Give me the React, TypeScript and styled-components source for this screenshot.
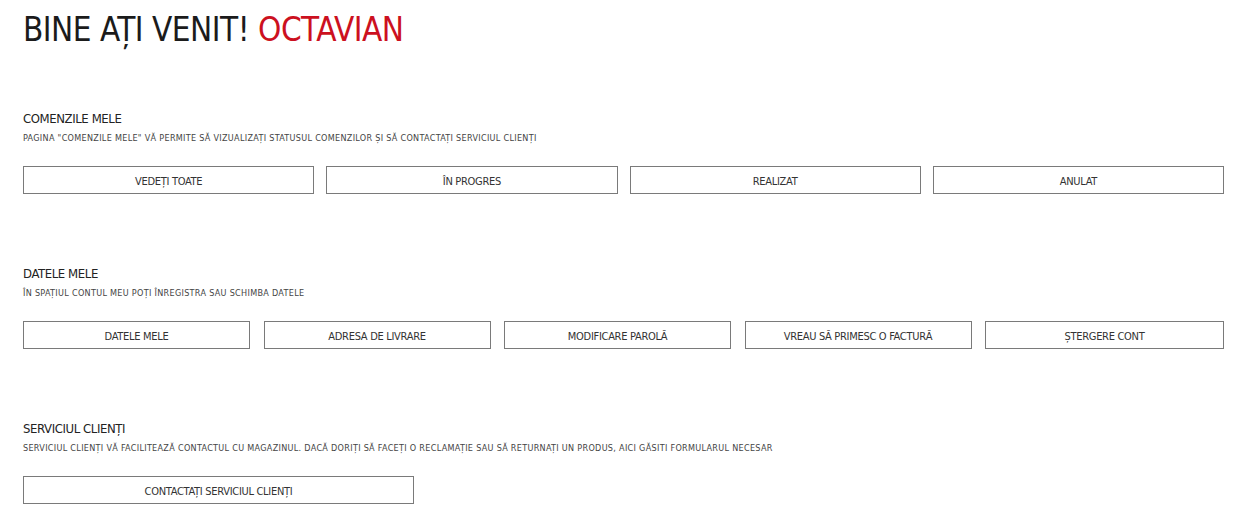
import React from "react"
import styled, { createGlobalStyle } from "styled-components"

const GlobalStyle = createGlobalStyle`
  body {
    margin: 0;
    background: #fff;
    font-family: "Liberation Sans Narrow", "DejaVu Sans Condensed", "Roboto", sans-serif;
    font-stretch: condensed;
    color: #222;
  }
`

interface Section {
  title: string
  text: string
  buttons: string[]
  layout: "even" | "fixed" | "single"
}

const sections: Section[] = [
  {
    title: "Comenzile mele",
    text: "Pagina \"Comenzile mele\" vă permite să vizualizați statusul comenzilor și să contactați serviciul clienți",
    buttons: ["Vedeți toate", "În progres", "Realizat", "Anulat"],
    layout: "even",
  },
  {
    title: "Datele mele",
    text: "În spațiul contul meu poți înregistra sau schimba datele",
    buttons: ["Datele mele", "Adresa de livrare", "Modificare parolă", "Vreau să primesc o factură", "Ștergere cont"],
    layout: "fixed",
  },
  {
    title: "Serviciul clienți",
    text: "Serviciul clienți vă facilitează contactul cu magazinul. Dacă doriți să faceți o reclamație sau să returnați un produs, aici găsiti formularul necesar",
    buttons: ["Contactați serviciul clienți"],
    layout: "single",
  },
]

const App = () => {
  return (
    <Page>
      <GlobalStyle />
      <Welcome>
        Bine ați venit! <Name>Octavian</Name>
      </Welcome>
      {sections.map(section => (
        <Block key={section.title}>
          <Title>{section.title}</Title>
          <Text>{section.text}</Text>
          <Buttons $layout={section.layout}>
            {section.buttons.map(label => (
              <Button key={label} $layout={section.layout}>{label}</Button>
            ))}
          </Buttons>
        </Block>
      ))}
    </Page>
  )
}

const Page = styled.div`
  padding: 10px 19px 20px 23px;
  text-transform: uppercase;
`

const Welcome = styled.h1`
  margin: 0;
  font-size: 33px;
  line-height: 40px;
  font-weight: 400;
  letter-spacing: -0.5px;
  color: #1b1b1b;
`

const Name = styled.span`
  color: #cc1020;
`

const Block = styled.section`
  margin-top: 61px;

  & + & {
    margin-top: 72px;
  }
`

const Title = styled.h2`
  margin: 0;
  font-size: 13px;
  line-height: 16px;
  font-weight: 400;
  letter-spacing: -0.4px;
  color: #222;
`

const Text = styled.p`
  margin: 5px 0 0;
  font-size: 9px;
  line-height: 12px;
  letter-spacing: 0.3px;
  color: #444;
`

const Buttons = styled.div<{ $layout: Section["layout"] }>`
  display: flex;
  gap: ${p => (p.$layout === "fixed" ? "13.5px" : "12px")};
  margin-top: 22px;
`

const Button = styled.button<{ $layout: Section["layout"] }>`
  flex: ${p => (p.$layout === "even" ? "1 1 0" : p.$layout === "single" ? "0 0 391px" : "0 0 227px")};
  height: 28px;
  padding: 2px 0 0;
  border: 1px solid #7a7a7a;
  background: #fff;
  font-family: inherit;
  font-stretch: condensed;
  font-size: 11px;
  letter-spacing: -0.3px;
  text-transform: uppercase;
  color: #333;
  cursor: pointer;

  &:last-child {
    flex-grow: ${p => (p.$layout === "fixed" ? 1 : "")};
  }
`

export default App
